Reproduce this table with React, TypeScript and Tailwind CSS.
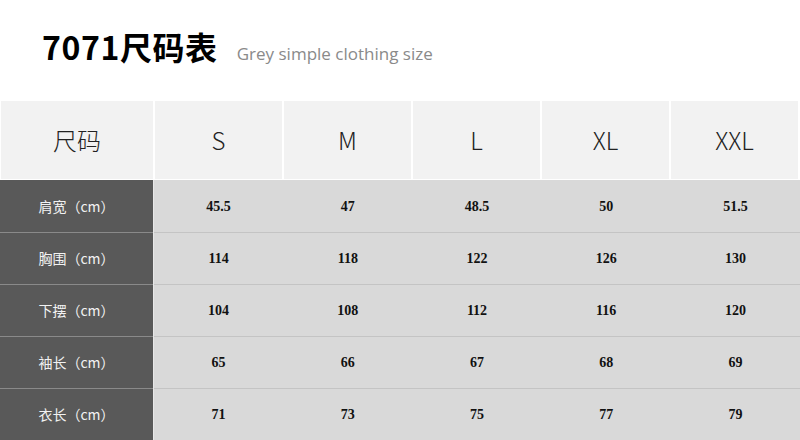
import React from "react";

const sizes = ["S", "M", "L", "XL", "XXL"];
const rows: { label: string; values: string[] }[] = [
  { label: "肩宽（cm）", values: ["45.5", "47", "48.5", "50", "51.5"] },
  { label: "胸围（cm）", values: ["114", "118", "122", "126", "130"] },
  { label: "下摆（cm）", values: ["104", "108", "112", "116", "120"] },
  { label: "袖长（cm）", values: ["65", "66", "67", "68", "69"] },
  { label: "衣长（cm）", values: ["71", "73", "75", "77", "79"] },
];

const cjk = "font-['Noto_Sans_CJK_SC','Noto_Sans',sans-serif]";

export default function App() {
  return (
    <div className="w-[800px] h-[440px] bg-white overflow-hidden">
      <div className="h-[101px] flex items-baseline pl-[42px] pt-[30px]">
        <span className={`${cjk} text-[32px] font-bold text-black leading-none tracking-[0.6px]`}>
          7071尺码表
        </span>
        <span className="font-['Open_Sans',sans-serif] text-[17px] text-[#8a8a8a] ml-[19px] leading-none">
          Grey simple clothing size
        </span>
      </div>
      <div className="grid grid-cols-[152px_repeat(5,1fr)] gap-x-[2px] pl-[1px] pr-[2px] h-[78px]">
        <div className={`bg-[#f2f2f2] flex items-center justify-center ${cjk} font-light text-[24px] text-[#222]`}>
          尺码
        </div>
        {sizes.map((s) => (
          <div
            key={s}
            className={`bg-[#f2f2f2] flex items-center justify-center ${cjk} font-light text-[24px] text-[#222]`}
          >
            {s}
          </div>
        ))}
      </div>
      <div className="h-[1px] bg-white" />
      {rows.map((r, i) => (
        <div key={r.label} className="flex h-[52px]">
          <div
            className={`w-[153px] bg-[#595959] flex items-center justify-center ${cjk} text-[14px] text-[#f2f2f2] ${
              i > 0 ? "border-t border-[#8a8a8a]" : ""
            }`}
          >
            {r.label}
          </div>
          <div className="w-[1px] bg-[#e8e8e8]" />
          <div className={`flex-1 flex bg-[#d9d9d9] ${i > 0 ? "border-t border-[#c4c4c4]" : ""}`}>
            {r.values.map((v, j) => (
              <div
                key={j}
                className="flex-1 flex items-center justify-center font-['Liberation_Serif',serif] font-bold text-[14px] text-[#111]"
              >
                {v}
              </div>
            ))}
          </div>
        </div>
      ))}
    </div>
  );
}
